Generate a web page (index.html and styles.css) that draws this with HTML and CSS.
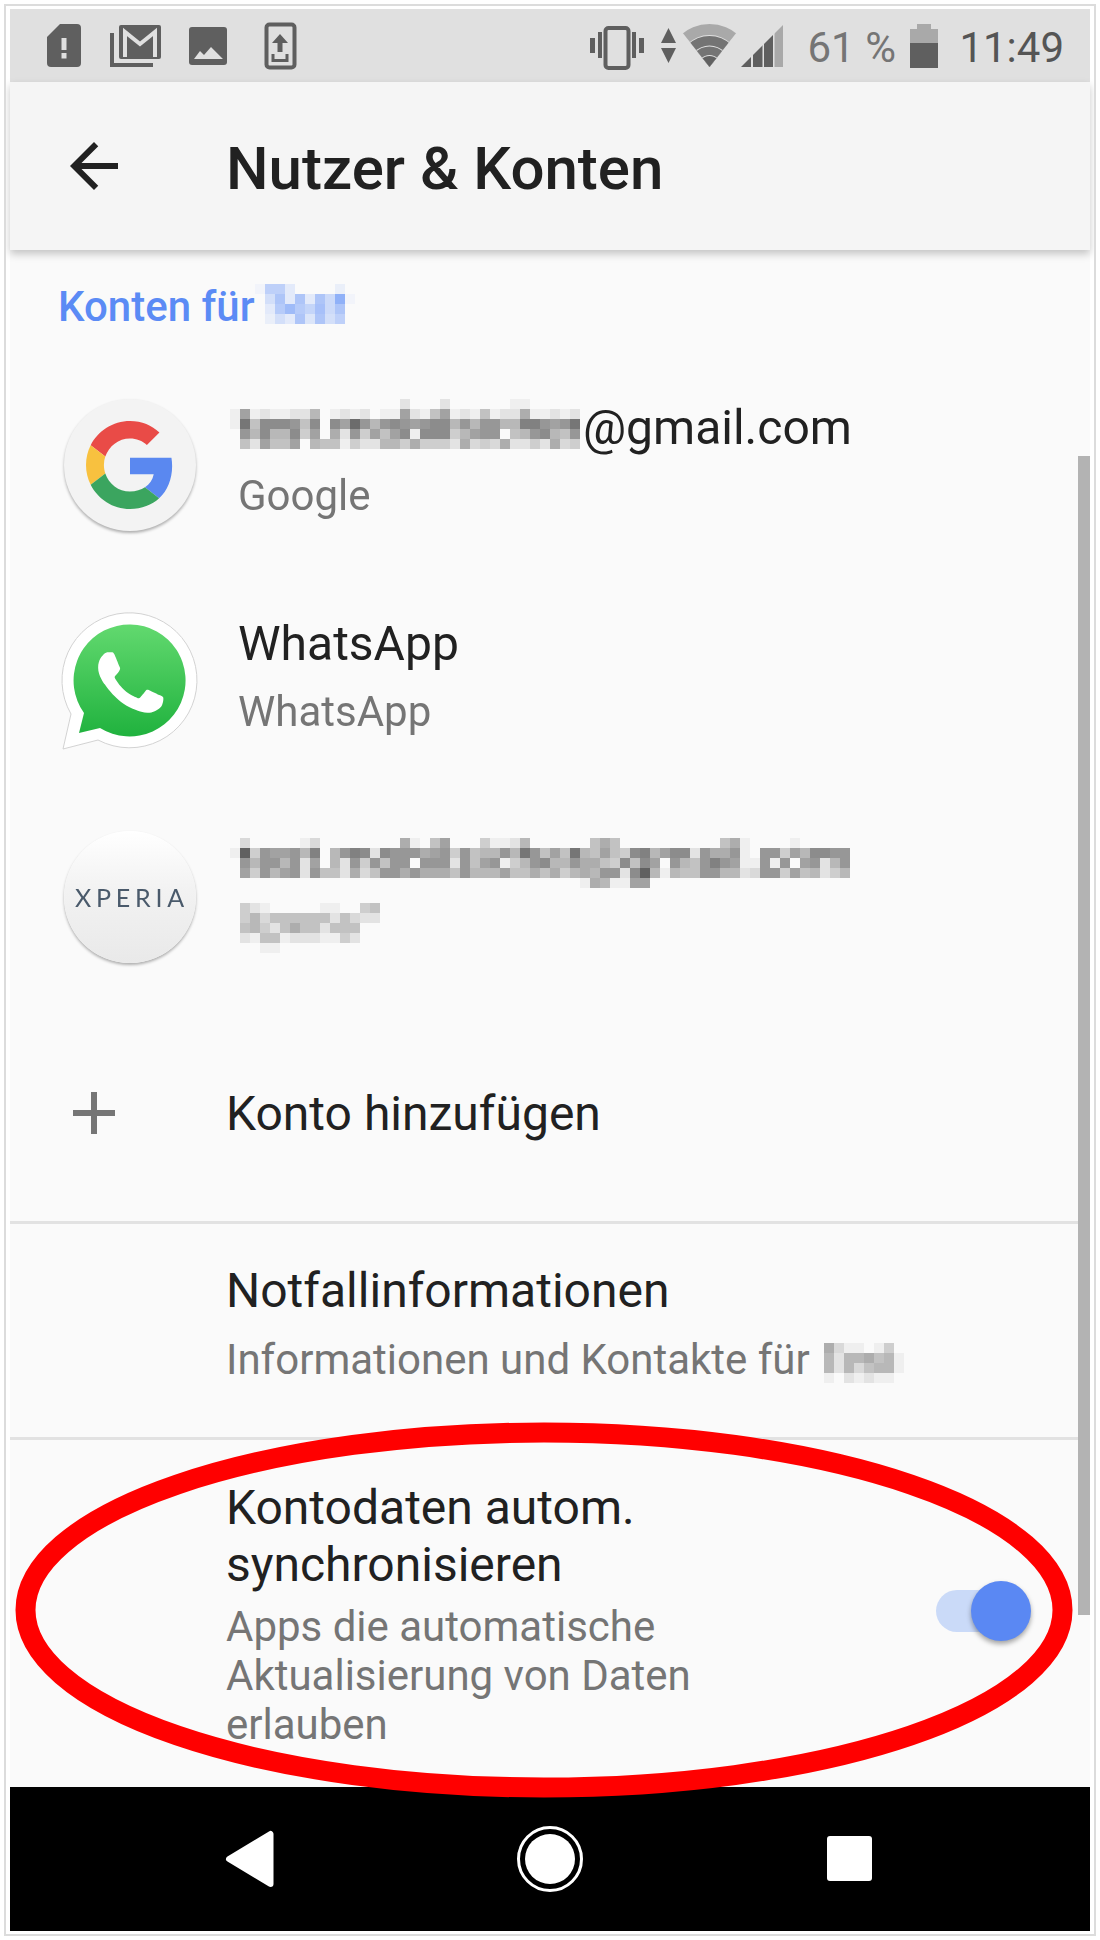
FILE: index.html
```html
<!DOCTYPE html>
<html lang="de">
  <head>
    <meta charset="UTF-8" />
    <meta name="viewport" content="width=device-width, initial-scale=1.0" />
    <title>Nutzer &amp; Konten</title>
    <link rel="stylesheet" href="styles.css">
  </head>
  <body>
    <div id="page">
      <div id="screen">
        <div id="status-bar">
          <svg class="status-left" width="252" height="53" viewBox="45 19 252 53">
            <!-- sim card -->
            <path class="ink" d="M60 24H77q4 0 4 4V63q0 4-4 4H51q-4 0-4-4V37Z" />
            <path class="cut" d="M61.500 38h5v12h-5zM61.500 53h5v5.500h-5z" />
            <!-- gmail stack -->
            <path class="ink" d="M110 33h4v30h39v4H110Z" />
            <rect class="ink" x="119" y="25" width="42" height="34" rx="2" />
            <path class="cut-line" d="M125 57V32L140 44 155 32V57" />
            <!-- picture -->
            <rect class="ink" x="189" y="27" width="38" height="38" rx="3" />
            <path class="cut" d="M194 59 200 51 204 55 211 47 223 59Z" />
            <!-- phone with upload -->
            <rect class="ink-line" x="266.500" y="24.500" width="28" height="43" rx="3" />
            <path class="ink" d="M280 34 288 43H282.500V52H277.500V43H272Z" />
            <path class="ink-line thin" d="M273 54V60.500H287V54" />
          </svg>
          <svg class="status-right" width="200" height="53" viewBox="585 19 200 53">
            <defs>
              <clipPath id="wifi-fan"><path d="M708.500 67 681 32V20H736V32Z" /></clipPath>
              <clipPath id="signal-shape"><path d="M740 67 782 25V67Z" /></clipPath>
            </defs>
            <!-- vibrate -->
            <path class="ink" d="M589 38h5v15h-5zM597 32h4v26h-4zM631 32h4v26h-4zM638 38h5v15h-5z" />
            <rect class="ink-line" x="604.500" y="28" width="23" height="40" rx="3" />
            <!-- data arrows -->
            <path class="ink" d="M667.500 28 675 43H660ZM660 48H675L667.500 63Z" />
            <!-- wifi -->
            <g clip-path="url(#wifi-fan)">
              <circle cx="708.500" cy="67" r="43" fill="#a9a9a9" />
              <circle cx="708.500" cy="67" r="32" fill="#e0e0e0" />
              <circle cx="708.500" cy="67" r="31" fill="#747474" />
              <circle cx="708.500" cy="67" r="21.500" fill="#e0e0e0" />
              <circle cx="708.500" cy="67" r="20.500" fill="#747474" />
              <circle cx="708.500" cy="67" r="12" fill="#e0e0e0" />
              <circle cx="708.500" cy="67" r="11" fill="#616161" />
            </g>
            <!-- signal -->
            <g clip-path="url(#signal-shape)">
              <path class="ink" d="M740 20h10v50h-10zM752 20h9.500v50h-9.500zM763 20h9v50h-9z" />
              <rect x="773.500" y="20" width="9" height="50" fill="#a9a9a9" />
            </g>
          </svg>
          <span class="status-percent">61 %</span>
          <svg class="status-battery" width="28" height="44" viewBox="0 0 28 44">
            <path fill="#a9a9a9" d="M7 0h14v5h7v14H0V5h7Z" />
            <rect class="ink" y="19" width="28" height="25" />
          </svg>
          <span class="status-time">11:49</span>
        </div>

        <div id="app-bar">
          <svg class="back-arrow" width="72" height="72" viewBox="0 0 24 24">
            <path d="M20 11H7.830l5.590-5.590L12 4l-8 8 8 8 1.410-1.410L7.830 13H20v-2z" />
          </svg>
          <h1 class="app-title">Nutzer &amp; Konten</h1>
        </div>

        <div id="content">
          <div class="category">
            Konten für
            <canvas class="mosaic category-mosaic" width="100" height="40" data-ink="#88abf8"
              data-rows="1883....2.|.5a3a3a6e1|.39c97b6a.|.253a4a58."></canvas>
          </div>

          <div class="row">
            <div class="avatar avatar-google">
              <svg width="88" height="88" viewBox="0 0 48 48">
                <path fill="#e94b47" d="M24 9.500c3.540 0 6.710 1.220 9.210 3.600l6.850-6.850C35.900 2.380 30.470 0 24 0 14.620 0 6.510 5.380 2.560 13.220l7.980 6.190C12.430 13.720 17.740 9.500 24 9.500z" />
                <path fill="#5a88f0" d="M46.980 24.550c0-1.570-.15-3.090-.38-4.550H24v9.020h12.940c-.58 2.960-2.260 5.480-4.780 7.180l7.730 6c4.510-4.180 7.090-10.360 7.090-17.650z" />
                <path fill="#f8c13f" d="M10.530 28.590c-.48-1.450-.76-2.990-.76-4.590s.27-3.140.76-4.590l-7.980-6.190C.92 16.460 0 20.120 0 24c0 3.880.92 7.540 2.560 10.780l7.970-6.190z" />
                <path fill="#3ba55f" d="M24 48c6.480 0 11.930-2.130 15.890-5.810l-7.730-6c-2.150 1.450-4.920 2.300-8.160 2.300-6.260 0-11.570-4.220-13.470-9.910l-7.980 6.190C6.510 42.620 14.620 48 24 48z" />
              </svg>
            </div>
            <div class="row-text">
              <div class="row-title">
                <canvas class="mosaic gmail-mosaic" width="350" height="50" data-ink="#555555"
                  data-rows=".................2...2......11|181211226.1212.118215812151227 11212|1c5aaa95a.a8d969a989aa6969966bb989c|.96a66a48.7294858a1aaa46899.569a659|.528558.655142266474442734372242734"></canvas>@gmail.com
              </div>
              <div class="row-sub">Google</div>
            </div>
          </div>

          <div class="row">
            <div class="avatar avatar-whatsapp">
              <svg width="140" height="140" viewBox="60 610 140 140">
                <defs>
                  <linearGradient id="whatsapp-green" x1="0" y1="0" x2="0" y2="1">
                    <stop offset="0" stop-color="#62d96f" />
                    <stop offset="1" stop-color="#20b23e" />
                  </linearGradient>
                </defs>
                <path fill="#ffffff" stroke="#d2d2d2" stroke-width="1" d="M71 713 63 748 98 739A67.500 67.500 0 1 0 71 713Z" />
                <path fill="url(#whatsapp-green)" d="M84 712 79 732 100 727A56 56 0 1 0 84 712Z" />
                <path fill="#ffffff" transform="translate(65.700 616.700) scale(5.400)" d="M17.472 14.382c-.297-.149-1.758-.867-2.030-.967-.273-.099-.471-.148-.670.150-.197.297-.767.966-.940 1.164-.173.199-.347.223-.644.075-.297-.150-1.255-.463-2.390-1.475-.883-.788-1.480-1.761-1.653-2.059-.173-.297-.018-.458.130-.606.134-.133.298-.347.446-.520.149-.174.198-.298.298-.497.099-.198.050-.371-.025-.520-.075-.149-.669-1.612-.916-2.207-.242-.579-.487-.500-.669-.510-.173-.008-.371-.010-.570-.010-.198 0-.520.074-.792.372-.272.297-1.040 1.016-1.040 2.479 0 1.462 1.065 2.875 1.213 3.074.149.198 2.096 3.200 5.077 4.487.709.306 1.262.489 1.694.625.712.227 1.360.195 1.871.118.571-.085 1.758-.719 2.006-1.413.248-.694.248-1.289.173-1.413-.074-.124-.272-.198-.570-.347z" />
              </svg>
            </div>
            <div class="row-text">
              <div class="row-title">WhatsApp</div>
              <div class="row-sub">WhatsApp</div>
            </div>
          </div>

          <div class="row">
            <div class="avatar avatar-xperia"><span class="xperia-logo">XPERIA</span></div>
            <div class="row-text">
              <div class="row-title">
                <canvas class="mosaic email-mosaic" width="620" height="50" data-ink="#555555"
                  data-rows=".3.....13........71.58...41126......575..........571....1|1e498896b.69ba2a9997894956696c9585c65854ab68aa297791.99486aa99|.96996928.62949599.9992958914 69a6697754a5a8.9659b9811919.89269|.8496892955273599797775966685575 74676992ae61655996623994856246|...................................1761188"></canvas>
              </div>
              <div class="row-sub">
                <canvas class="mosaic xperia-mosaic" width="150" height="50" data-ink="#555555"
                  data-rows=".421.....11..45|.46355555525322|.564257552555|.215512221142|...11"></canvas>
              </div>
            </div>
          </div>

          <div class="row row-action">
            <svg class="plus-icon" width="42" height="42" viewBox="0 0 42 42">
              <path d="M18 0h6v18h18v6H24v18h-6V24H0v-6h18z" />
            </svg>
            <div class="row-title">Konto hinzufügen</div>
          </div>

          <div class="row row-plain">
            <div class="row-text">
              <div class="row-title">Notfallinformationen</div>
              <div class="row-sub sub-with-mosaic">
                Informationen und Kontakte für
                <canvas class="mosaic test-mosaic" width="80" height="40" data-ink="#555555"
                  data-rows="7311.14.|62667561|62635661|1.21211"></canvas>
              </div>
            </div>
          </div>

          <div class="row row-plain row-sync">
            <div class="row-text">
              <div class="row-title">Kontodaten autom. synchronisieren</div>
              <div class="row-sub">Apps die automatische Aktualisierung von Daten erlauben</div>
            </div>
            <div class="toggle">
              <div class="toggle-track"></div>
              <div class="toggle-thumb"></div>
            </div>
          </div>
        </div>

        <div id="scrollbar"></div>

        <div id="nav-bar">
          <svg width="1080" height="144" viewBox="10 1786 1080 144">
            <path fill="#ffffff" stroke="#ffffff" stroke-width="6" stroke-linejoin="round" d="M229 1858 270.500 1833V1883Z" />
            <circle cx="550" cy="1858" r="31.500" fill="none" stroke="#ffffff" stroke-width="3" />
            <circle cx="550" cy="1858" r="25" fill="#ffffff" />
            <rect x="827" y="1835" width="45" height="45" rx="3" fill="#ffffff" />
          </svg>
        </div>
      </div>

      <svg id="red-ring" width="1100" height="1940" viewBox="0 0 1100 1940">
        <ellipse cx="544" cy="1610" rx="518.500" ry="177.500" />
      </svg>
    </div>
    <script src="mosaic.js"></script>
  </body>
</html>
```

FILE: styles.css
```css
* {
  box-sizing: border-box;
}
body {
  margin: 0;
  background: #ffffff;
  font-family: Roboto, "Liberation Sans", sans-serif;
  color: #212121;
}
#page {
  position: relative;
  width: 1100px;
  height: 1940px;
  padding: 4px;
}
#screen {
  position: relative;
  display: flex;
  flex-direction: column;
  height: 1932px;
  padding: 3px 4px;
  border: 2px solid #dcdcdc;
  overflow: hidden;
  background: #ffffff;
}

/* status bar */
#status-bar {
  display: flex;
  align-items: center;
  flex: 0 0 73px;
  padding: 0 26px 0 35px;
  background: #e0e0e0;
  color: #555555;
  font-size: 42px;
}
.ink {
  fill: #5f5f5f;
}
.cut {
  fill: #e0e0e0;
}
.cut-line {
  fill: none;
  stroke: #e0e0e0;
  stroke-width: 4;
}
.ink-line {
  fill: none;
  stroke: #5f5f5f;
  stroke-width: 4;
}
.thin {
  stroke-width: 3;
}
.status-left {
  margin-right: auto;
}
.status-percent {
  margin-left: 22px;
  padding-top: 4px;
  color: #757575;
}
.status-battery {
  margin-left: 14.5px;
}
.status-time {
  margin-left: 21px;
  padding-top: 4px;
}

/* app bar */
#app-bar {
  position: relative;
  z-index: 2;
  display: flex;
  align-items: center;
  flex: 0 0 168px;
  padding-left: 48px;
  background: #f5f5f5;
  box-shadow: 0 4px 8px rgba(0, 0, 0, 0.22);
}
.back-arrow {
  fill: #212121;
}
.app-title {
  margin: 0 0 0 96px;
  padding-top: 5px;
  font-size: 60px;
  font-weight: 500;
}

/* list */
#content {
  flex: 1;
  overflow: hidden;
  background: #fafafa;
}
.category {
  display: flex;
  align-items: flex-start;
  height: 107px;
  padding: 32px 0 0 48px;
  color: #5b8bf5;
  font-size: 42px;
  font-weight: 500;
}
.row {
  display: flex;
  align-items: center;
  height: 216px;
  padding-left: 54px;
}
.row-text {
  align-self: flex-start;
  padding-top: 42px;
}
.row-title {
  display: flex;
  align-items: flex-start;
  min-height: 56px;
  font-size: 48px;
}
.row-sub {
  min-height: 49px;
  margin-top: 15px;
  color: #757575;
  font-size: 42px;
}
.avatar {
  display: flex;
  align-items: center;
  justify-content: center;
  flex: 0 0 132px;
  min-width: 0;
  height: 132px;
  margin-right: 42px;
  border-radius: 50%;
}
.avatar-google {
  background: #f3f3f3;
  box-shadow: 0 2px 3px rgba(0, 0, 0, 0.3);
}
.avatar-whatsapp svg {
  flex: none;
}
.avatar-xperia {
  background: linear-gradient(#ffffff, #f2f2f2 45%, #e9e9e9);
  box-shadow: 0 2px 3px rgba(0, 0, 0, 0.3);
}
.xperia-logo {
  padding-left: 4px;
  color: #4a5a6b;
  font-family: Lato, sans-serif;
  font-size: 25px;
  letter-spacing: 4.8px;
}
.mosaic {
  display: block;
  flex: none;
}
.category-mosaic {
  margin: 2px 0 0 0;
}
.gmail-mosaic {
  margin: 0 3px 0 -8px;
}
.email-mosaic {
  margin: 7px 0 0 -8px;
}
.xperia-mosaic {
  margin: 6px 0 0 -8px;
}
.row-action {
  padding-left: 63px;
}
.plus-icon {
  margin-right: 111px;
  fill: #757575;
}
.row-plain {
  padding-left: 216px;
  border-top: 3px solid #e2e2e2;
}
.row-plain .row-text {
  padding-top: 38px;
}
.sub-with-mosaic {
  display: flex;
  align-items: flex-start;
  gap: 14px;
  margin-top: 16px;
}
.test-mosaic {
  margin-top: 8px;
}
.row-sync {
  position: relative;
  height: 346px;
}
.row-sync .row-text {
  width: 620px;
  padding-top: 39px;
}
.row-sync .row-sub {
  margin-top: 9px;
}
.toggle {
  position: relative;
  align-self: flex-start;
  width: 95px;
  height: 60px;
  margin: 141px 59px 0 auto;
}
.toggle-track {
  width: 80px;
  height: 42px;
  margin-top: 9px;
  border-radius: 21px;
  background: #cadaf8;
}
.toggle-thumb {
  position: absolute;
  top: 0;
  right: 0;
  width: 60px;
  height: 60px;
  border-radius: 50%;
  background: #5a88f3;
  box-shadow: 0 3px 5px rgba(0, 0, 0, 0.35);
}

/* bottom */
#scrollbar {
  position: absolute;
  top: 450px;
  right: 4px;
  width: 12px;
  height: 1159px;
  background: #b3b3b3;
}
#nav-bar {
  flex: 0 0 144px;
  background: #000000;
}
#nav-bar svg {
  display: block;
}
#red-ring {
  position: absolute;
  top: 0;
  left: 0;
}
#red-ring ellipse {
  fill: none;
  stroke: #ff0000;
  stroke-width: 20;
}
```

FILE: mosaic.js
```js
// paints the pixelated (anonymised) names, one hex digit per 10px cell = opacity of the ink
const mosaics = document.querySelectorAll(".mosaic");
mosaics.forEach((mosaic) => {
  const ctx = mosaic.getContext("2d");
  const rows = mosaic.dataset.rows.replace(/ /g, "").split("|");
  ctx.fillStyle = mosaic.dataset.ink;
  rows.forEach((row, y) => {
    for (let x = 0; x < row.length; x++) {
      if (row[x] === ".") continue;
      ctx.globalAlpha = parseInt(row[x], 16) / 15;
      ctx.fillRect(x * 10, y * 10, 10, 10);
    }
  });
});
```
